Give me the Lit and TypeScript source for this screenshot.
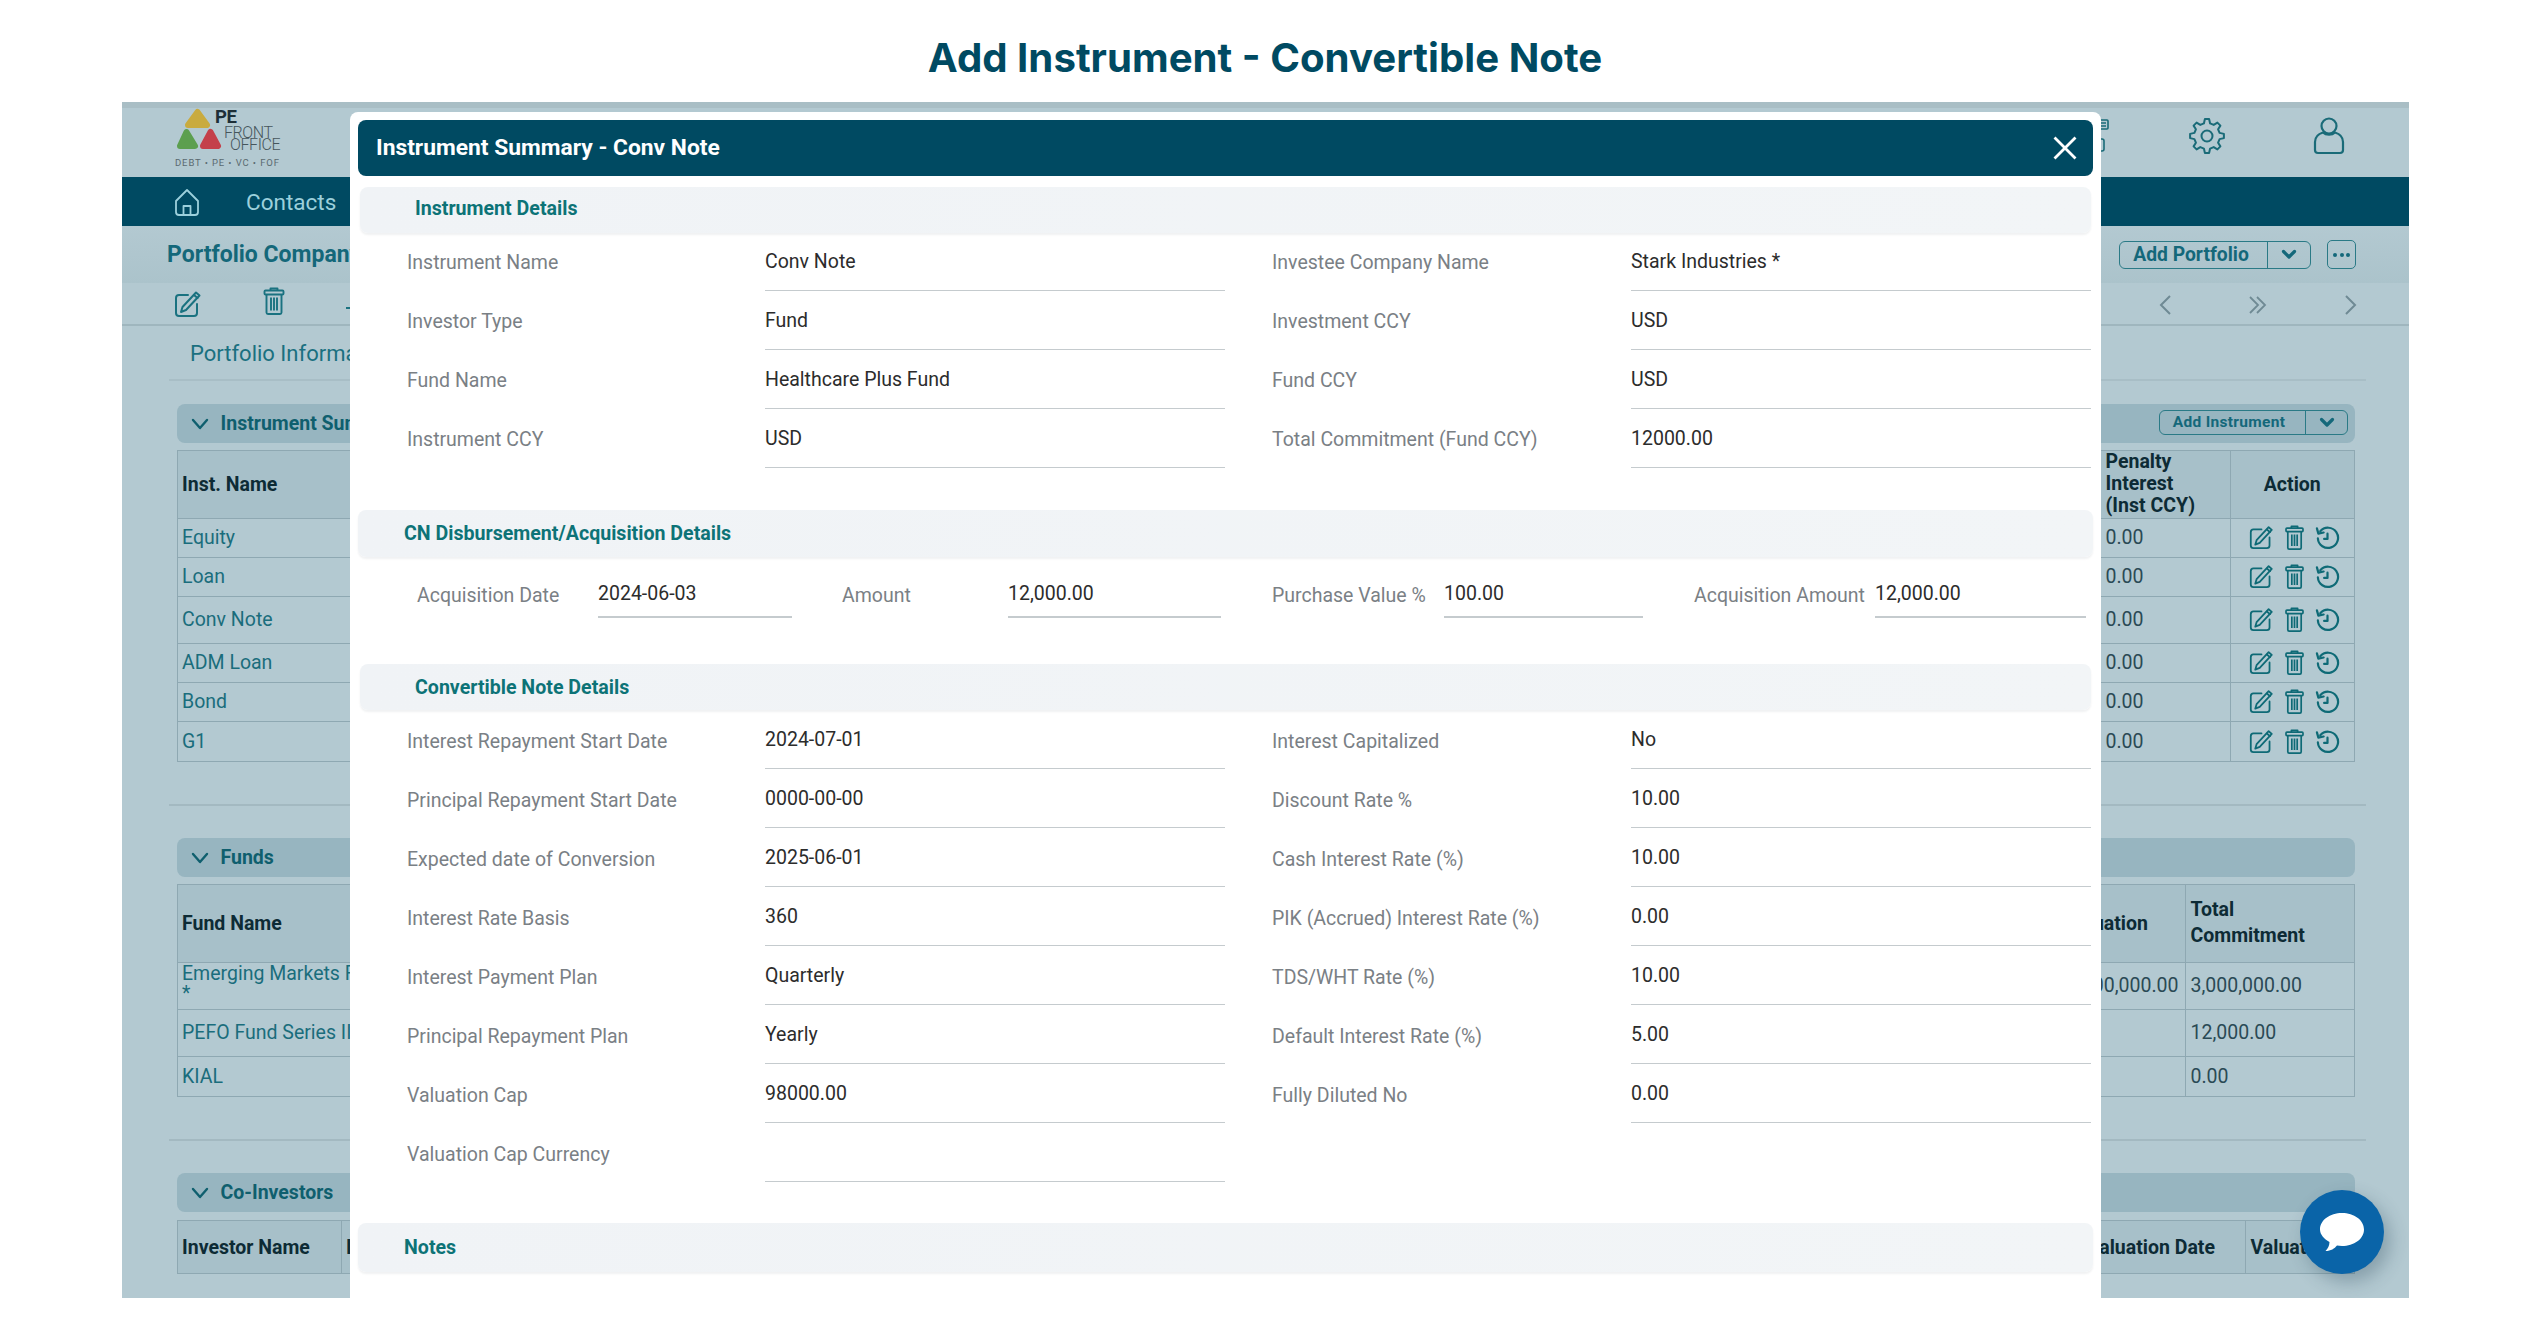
import { LitElement, html, css } from "lit";
import { customElement } from "lit/decorators.js";

const gearPath = (() => {
  const cx = 20, cy = 20, teeth = 8, ro = 17, ri = 13;
  let d = "";
  for (let i = 0; i < teeth; i++) {
    const a = (i / teeth) * Math.PI * 2 - Math.PI / 2;
    const w = Math.PI / teeth;
    const pts: [number, number][] = [
      [ri, a - w * 0.62],
      [ro, a - w * 0.32],
      [ro, a + w * 0.32],
      [ri, a + w * 0.62],
    ];
    for (const [r, t] of pts) {
      const x = (cx + r * Math.cos(t)).toFixed(1);
      const y = (cy + r * Math.sin(t)).toFixed(1);
      d += (d ? "L" : "M") + x + " " + y + " ";
    }
  }
  return d + "Z";
})();

const editIcon = (s = 28) => html`<svg class="ic" width=${s} height=${s} viewBox="0 0 28 28" fill="none" stroke="currentColor" stroke-width="2" stroke-linejoin="round" stroke-linecap="round">
  <path d="M14 5H5a3 3 0 0 0-3 3v15a3 3 0 0 0 3 3h15a3 3 0 0 0 3-3v-9"/>
  <path d="M22 2.500l3.500 3L12 20l-5 2 1.500-5z"/><path d="M20 5l3.500 3"/></svg>`;

const trashIcon = (s = 28) => html`<svg class="ic" width=${s} height=${s} viewBox="0 0 24 28" fill="none" stroke="currentColor" stroke-width="1.900" stroke-linejoin="round">
  <path d="M8.500 3.500V1.500h7v2"/><rect x="2.500" y="3.500" width="19" height="4" rx="1"/>
  <path d="M4.500 7.500v18a1.500 1.500 0 0 0 1.500 1.500h12a1.500 1.500 0 0 0 1.500-1.500v-18"/>
  <path d="M9 10.500v13M12 10.500v13M15 10.500v13"/></svg>`;

const historyIcon = (s = 26) => html`<svg class="ic" width=${s} height=${s} viewBox="0 0 26 26" fill="none" stroke="currentColor" stroke-width="2.300" stroke-linecap="round" stroke-linejoin="round">
  <path d="M5.500 6.500A10.500 10.500 0 1 1 3 14"/><path d="M2 3.500l1.500 5.500 5.500-1.200"/><path d="M13 9v5.500H9.500"/></svg>`;

const chevron = html`<svg class="chev" width="18" height="12" viewBox="0 0 18 12" fill="none" stroke="currentColor" stroke-width="2.400" stroke-linecap="round" stroke-linejoin="round"><path d="M2 2l7 8 7-8"/></svg>`;

const boldChevron = html`<svg width="16" height="11" viewBox="0 0 16 11" fill="none" stroke="currentColor" stroke-width="3.200" stroke-linejoin="round" stroke-linecap="round"><path d="M2.500 2.500L8 8l5.500-5.500"/></svg>`;

const logo = html`<svg class="logo" width="120" height="68" viewBox="0 0 120 68">
  <polygon points="22.500,5 32,18 13,18" fill="#c9ab3f" stroke="#c9ab3f" stroke-width="6" stroke-linejoin="round"/>
  <polygon points="11.500,25 20,39 5,39" fill="#5c9f4f" stroke="#5c9f4f" stroke-width="6" stroke-linejoin="round"/>
  <polygon points="35.500,25 43,39 28,39" fill="#c4404a" stroke="#c4404a" stroke-width="6" stroke-linejoin="round"/>
  <text x="40" y="16" class="pe">PE</text>
  <text x="49" y="31" class="fo">FRONT</text>
  <text x="55" y="43" class="fo">OFFICE</text>
  <text x="0" y="59" class="tag" textLength="104" lengthAdjust="spacing">DEBT • PE • VC • FOF</text>
</svg>`;

type Row = { name: string; pen: string };
const instruments: Row[] = [
  { name: "Equity", pen: "0.00" },
  { name: "Loan", pen: "0.00" },
  { name: "Conv Note", pen: "0.00" },
  { name: "ADM Loan", pen: "0.00" },
  { name: "Bond", pen: "0.00" },
  { name: "G1", pen: "0.00" },
];

const detailRows = [
  ["Instrument Name", "Conv Note", "Investee Company Name", "Stark Industries *"],
  ["Investor Type", "Fund", "Investment CCY", "USD"],
  ["Fund Name", "Healthcare Plus Fund", "Fund CCY", "USD"],
  ["Instrument CCY", "USD", "Total Commitment (Fund CCY)", "12000.00"],
];

const noteRows = [
  ["Interest Repayment Start Date", "2024-07-01", "Interest Capitalized", "No"],
  ["Principal Repayment Start Date", "0000-00-00", "Discount Rate %", "10.00"],
  ["Expected date of Conversion", "2025-06-01", "Cash Interest Rate (%)", "10.00"],
  ["Interest Rate Basis", "360", "PIK (Accrued) Interest Rate (%)", "0.00"],
  ["Interest Payment Plan", "Quarterly", "TDS/WHT Rate (%)", "10.00"],
  ["Principal Repayment Plan", "Yearly", "Default Interest Rate (%)", "5.00"],
  ["Valuation Cap", "98000.00", "Fully Diluted No", "0.00"],
  ["Valuation Cap Currency", "", "", ""],
];

const acquisition = [
  ["Acquisition Date", "2024-06-03"],
  ["Amount", "12,000.00"],
  ["Purchase Value %", "100.00"],
  ["Acquisition Amount", "12,000.00"],
];

@customElement("app-root")
export class AppRoot extends LitElement {
  static styles = css`
    :host { display: block; font-family: Roboto, "Liberation Sans", sans-serif; background: #fff; }
    * { box-sizing: border-box; }
    .page { position: relative; height: 1330px; overflow: hidden; background: #fff; }
    h1 { margin: 0; height: 102px; padding-top: 12px; display: flex; align-items: center; justify-content: center;
      font: 700 40.200px Inter, Roboto, sans-serif; color: #004a62; }

    .app { position: relative; margin-left: 122px; width: 2287px; height: 1196px; overflow: hidden; background: #b3c9d1; color: #1a6d7c; font-size: 19.500px; }
    .hdr { height: 75px; border-top: 6px solid #a9bec5; display: flex; align-items: center; padding: 0 64px 0 53px; }
    .hdr .spacer { flex: 1; }
    .logo { display: block; margin-top: -3px; }
    .logo .pe { font: 700 18.500px Roboto, sans-serif; fill: #1d2f38; letter-spacing: -.4px; }
    .logo .fo { font: 300 16px Roboto, sans-serif; fill: #46565c; letter-spacing: -.4px; }
    .logo .tag { font: 400 9.500px Roboto, sans-serif; fill: #5a6a70; }
    .hdr-icons { display: flex; align-items: center; color: #1a6b78; margin-top: -13px; }
    .hdr-icons .tiny { margin-right: 78px; }
    .hdr-icons .gear { margin-right: 86px; }
    .nav { height: 49px; background: #004a62; display: flex; align-items: center; padding-left: 52px; gap: 46px; color: #9cd0dc; font-size: 22.500px; }
    .titlebar { height: 57px; background: linear-gradient(#b3c9d1, #abc3cb); display: flex; align-items: center; justify-content: space-between; padding: 0 53px 0 45px; }
    .titlebar .t { font-size: 23px; font-weight: 700; color: #14687a; }
    .tb-actions { display: flex; gap: 16px; align-items: center; }
    .split { display: flex; border: 1.500px solid #2a7a86; border-radius: 6px; color: #14687a; font-weight: 700; align-items: stretch; }
    .split .lbl { display: flex; align-items: center; justify-content: center; border-right: 1.500px solid #2a7a86; }
    .split .arr { display: flex; align-items: center; justify-content: center; }
    .split.lg { width: 192px; height: 28px; font-size: 19.300px; }
    .split.lg .lbl { width: 148px; padding-right: 5px; }
    .split.lg .arr { flex: 1; }
    .split.sm { width: 189px; height: 25px; font-size: 15.500px; letter-spacing: .3px; margin-top: -3px; }
    .split.sm .lbl { width: 146px; padding-right: 7px; }
    .split.sm .arr { flex: 1; }
    .dots { width: 29px; height: 29px; border: 1.500px solid #2a7a86; border-radius: 5px; display: flex; align-items: center; justify-content: center; gap: 2.500px; }
    .dots i { width: 4px; height: 4px; border-radius: 50%; background: #14687a; }
    .toolbar { height: 43px; border-bottom: 2px solid #9fb6be; display: flex; align-items: center; padding: 0 51px 0 52px; color: #1a7280; }
    .toolbar .ic { flex: none; }
    .toolbar .trash { margin-left: 58px; }
    .toolbar .dash { margin-left: 58px; width: 6px; height: 2px; background: #1a7280; margin-top: 8px; }
    .toolbar .pager { margin-left: auto; display: flex; align-items: center; color: #6f8a94; padding-top: 2px; }
    .toolbar .pager svg { display: block; }
    .toolbar .pager .dbl { margin: 0 76px 0 76px; }
    .tab { margin: 0 43px 0 47px; height: 55px; padding-top: 2px; border-bottom: 2px solid #a8bec6; display: flex; align-items: center; padding-left: 21px; font-size: 22px; color: #1a7080; }
    .sect { padding: 0 54px 0 54.500px; }
    .band { height: 39px; background: #97b5c0; border-radius: 8px; display: flex; align-items: center; padding: 0 7px 0 14px; gap: 12px; color: #0f5f6e; font-weight: 700; font-size: 19.500px; }
    .band .chev { color: #0f5f6e; }
    .band .split { margin-left: auto; }
    .gap-a { margin-top: 23px; }
    .gap-c { margin-top: 32px; }
    .tbl { border: 1.500px solid #8ea8b2; margin-top: 7px; display: grid; }
    .cell { padding: 0 5px 0 4.500px; display: flex; align-items: center; border-bottom: 1.500px solid #8ea8b2; white-space: nowrap; overflow: hidden; }
    .cell.b-l { border-left: 1.500px solid #8ea8b2; }
    .cell.last { border-bottom: 0; }
    .th { background: #a7c0c9; color: #0d2b35; font-weight: 700; }
    .wrap { white-space: normal; line-height: 22px; }
    .center { justify-content: center; }
    .num { color: #2a4a55; }
    .inst { grid-template-columns: 1fr 129px 124px; grid-template-rows: 67.500px 39px 39px 47px 39px 39px 39px; }
    .acts { justify-content: center; gap: 8px; color: #0e6a76; padding: 0 0 0 3px; }
    .rule { margin: 42.500px 43px 0 47px; height: 2px; background: #a3b9c1; }
    .funds { grid-template-columns: 1fr 139px 169px; grid-template-rows: 77.500px 47px 47px 39px; }
    .funds .multi { white-space: normal; line-height: 26px; }
    .funds .fname { line-height: 20px; align-items: flex-start; justify-content: flex-start; padding-top: 1px; flex-direction: column; }
    .funds .hv { padding-left: 19px; }
    .funds .dv { padding-left: 21px; }
    .coinv { height: 54px; margin-top: 8px; grid-template-columns: 163px 1fr 109px; }
    .coinv .cell { border-bottom: 0; }
    .coinv .mid { justify-content: space-between; padding-right: 30px; }
    .fab { position: absolute; right: 25px; bottom: 24px; width: 84px; height: 84px; border-radius: 50%; background: #0a64a8; display: flex; align-items: center; justify-content: center; box-shadow: 6px 8px 18px rgba(30, 60, 80, .3); }

    .modal { position: absolute; left: 350px; top: 112px; width: 1751px; height: 1218px; background: #fff; border-radius: 8px 8px 0 0; padding: 8px 8px 0; }
    .m-hd { height: 56px; background: #004a62; border-radius: 8px; display: flex; align-items: center; justify-content: space-between; padding: 0 16px 2px 18px; color: #fff; font-size: 22.800px; font-weight: 700; }
    .m-hd svg { display: block; margin-top: 2px; }
    .sec { height: 46px; margin: 11px 2px 0; background: linear-gradient(90deg, #f0f3f6, #f2f5f7); border-radius: 8px; box-shadow: 0 2px 2px rgba(60, 80, 90, .08); display: flex; align-items: center; padding-left: 55px; color: #0d7377; font-weight: 700; font-size: 19.600px; }
    .sec.first { padding-bottom: 4px; }
    .sec.wide { margin: 42px 0 0; height: 47px; padding-left: 46px; }
    .sec.s-conv { margin-top: 46px; }
    .sec.s-notes { margin-top: 41px; height: 49px; }
    .grid { display: grid; grid-template-columns: 358px 460px 406px 460px; padding-left: 49px; grid-auto-rows: 59px; margin-top: -1px; }
    .grid.notes { margin-top: 0; }
    .lab { display: flex; align-items: center; padding-top: 2px; color: #7a8085; font-size: 19.500px; }
    .grid.notes .lab { padding-top: 3px; }
    .val { display: flex; align-items: center; color: #2c2c2c; font-size: 19.500px; border-bottom: 1.500px solid #c5cbce; }
    .val.none { border-bottom: 0; }
    .col2 { padding-left: 47px; }
    .acq { display: grid; grid-template-columns: 181px 194px 216px 213px 223px 199px 232px 211px; height: 61px; padding-left: 59px; }
    .acq .val { padding-top: 14px; border-bottom-width: 2px; }
    .acq .lab { padding-top: 16px; }
    .acq .lab:nth-child(3) { padding-left: 50px; }
    .acq .lab:nth-child(5), .acq .lab:nth-child(7) { padding-left: 51px; }
  `;

  render() {
    return html`<div class="page">
      <h1>Add Instrument - Convertible Note</h1>
      <div class="app">
        <div class="hdr">
          ${logo}
          <span class="spacer"></span>
          <div class="hdr-icons">
            <svg class="tiny" width="32" height="34" viewBox="0 0 32 34" fill="none" stroke="currentColor" stroke-width="1.600"><rect x="19" y="1" width="12" height="9" rx="1"/><path d="M21 4h8M21 7h8"/><rect x="18" y="20" width="9" height="12" rx="2"/></svg>
            <svg class="gear" width="40" height="40" viewBox="0 0 40 40" fill="none" stroke="currentColor" stroke-width="2" stroke-linejoin="round"><path d=${gearPath}/><circle cx="20" cy="20" r="5.500"/></svg>
            <svg width="32" height="38" viewBox="0 0 32 38" fill="none" stroke="currentColor" stroke-width="2.200" stroke-linejoin="round"><circle cx="16" cy="9" r="7.500"/><path d="M10 15.500C5 17 2 20 2 25v8a3 3 0 0 0 3 3h22a3 3 0 0 0 3-3v-8c0-5-3-8-8-9.500-3 3-9 3-12 0z"/></svg>
          </div>
        </div>
        <div class="nav">
          <svg width="26" height="28" viewBox="0 0 26 28" fill="none" stroke="currentColor" stroke-width="1.800" stroke-linejoin="round"><path d="M13 2L2 13v11a3 3 0 0 0 3 3h16a3 3 0 0 0 3-3V13z"/><path d="M9.500 27v-9h7v9"/></svg>
          <span>Contacts</span>
        </div>
        <div class="titlebar">
          <span class="t">Portfolio Company</span>
          <div class="tb-actions">
            <div class="split lg"><span class="lbl">Add Portfolio</span><span class="arr">${boldChevron}</span></div>
            <div class="dots"><i></i><i></i><i></i></div>
          </div>
        </div>
        <div class="toolbar">
          ${editIcon(28)}<span class="trash">${trashIcon(28)}</span><span class="dash"></span>
          <div class="pager">
            <svg width="14" height="22" viewBox="0 0 14 22" fill="none" stroke="currentColor" stroke-width="2"><path d="M12 2L3 11l9 9"/></svg>
            <svg class="dbl" width="20" height="20" viewBox="0 0 20 20" fill="none" stroke="currentColor" stroke-width="1.800"><path d="M2 2l8 8-8 8M9 2l8 8-8 8"/></svg>
            <svg width="14" height="22" viewBox="0 0 14 22" fill="none" stroke="currentColor" stroke-width="2"><path d="M2 2l9 9-9 9"/></svg>
          </div>
        </div>
        <div class="tab">Portfolio Information</div>

        <div class="sect gap-a">
          <div class="band">${chevron}<span>Instrument Summary</span>
            <div class="split sm"><span class="lbl">Add Instrument</span><span class="arr">${boldChevron}</span></div>
          </div>
          <div class="tbl inst">
            <div class="cell th">Inst. Name</div>
            <div class="cell th wrap">Penalty<br />Interest<br />(Inst CCY)</div>
            <div class="cell th b-l center">Action</div>
            ${instruments.map((r, i) => {
              const last = i === instruments.length - 1 ? "last" : "";
              return html`<div class="cell ${last}">${r.name}</div>
                <div class="cell num ${last}">${r.pen}</div>
                <div class="cell b-l acts ${last}">${editIcon(25)}${trashIcon(25)}${historyIcon(25)}</div>`;
            })}
          </div>
        </div>
        <div class="rule"></div>

        <div class="sect">
          <div class="band gap-c">${chevron}<span>Funds</span></div>
          <div class="tbl funds">
            <div class="cell th">Fund Name</div>
            <div class="cell th hv">Valuation</div>
            <div class="cell th b-l multi">Total Commitment</div>
            <div class="cell fname"><span>Emerging Markets Fund</span><span>*</span></div>
            <div class="cell num dv">3,000,000.00</div>
            <div class="cell b-l num">3,000,000.00</div>
            <div class="cell">PEFO Fund Series II</div>
            <div class="cell num"></div>
            <div class="cell b-l num">12,000.00</div>
            <div class="cell last">KIAL</div>
            <div class="cell num last"></div>
            <div class="cell b-l num last">0.00</div>
          </div>
        </div>
        <div class="rule"></div>

        <div class="sect">
          <div class="band gap-c">${chevron}<span>Co-Investors</span></div>
          <div class="tbl coinv">
            <div class="cell th">Investor Name</div>
            <div class="cell th b-l mid"><span>Investor Type</span><span>Valuation Date</span></div>
            <div class="cell th b-l">Valuation</div>
          </div>
        </div>

        <div class="fab">
          <svg width="46" height="40" viewBox="0 0 46 40"><path fill="#fff" d="M23 1c12 0 22 7 22 16.500S35 34 23 34c-1.800 0-3.500-.2-5-.5C15.500 36.500 12 39 6.500 39c2.500-2.500 3.800-5 4-9C5 27 1 22.500 1 17.500 1 8 11 1 23 1z"/></svg>
        </div>
      </div>

      <div class="modal">
        <div class="m-hd">
          <span>Instrument Summary - Conv Note</span>
          <svg width="24" height="24" viewBox="0 0 24 24" fill="none" stroke="#fff" stroke-width="2.800" stroke-linecap="square"><path d="M2.500 2.500l19 19M21.500 2.500l-19 19"/></svg>
        </div>
        <div class="sec first">Instrument Details</div>
        ${this.fields(detailRows)}
        <div class="sec wide">CN Disbursement/Acquisition Details</div>
        <div class="acq">
          ${acquisition.map((a) => html`<div class="lab">${a[0]}</div><div class="val">${a[1]}</div>`)}
        </div>
        <div class="sec s-conv">Convertible Note Details</div>
        ${this.fields(noteRows, "notes")}
        <div class="sec wide s-notes">Notes</div>
      </div>
    </div>`;
  }

  private fields(rows: string[][], cls = "") {
    return html`<div class="grid ${cls}">
      ${rows.map(
        (r) => html`<div class="lab">${r[0]}</div><div class="val">${r[1]}</div>
          <div class="lab col2">${r[2]}</div><div class="val ${r[2] ? "" : "none"}">${r[3]}</div>`
      )}
    </div>`;
  }
}
